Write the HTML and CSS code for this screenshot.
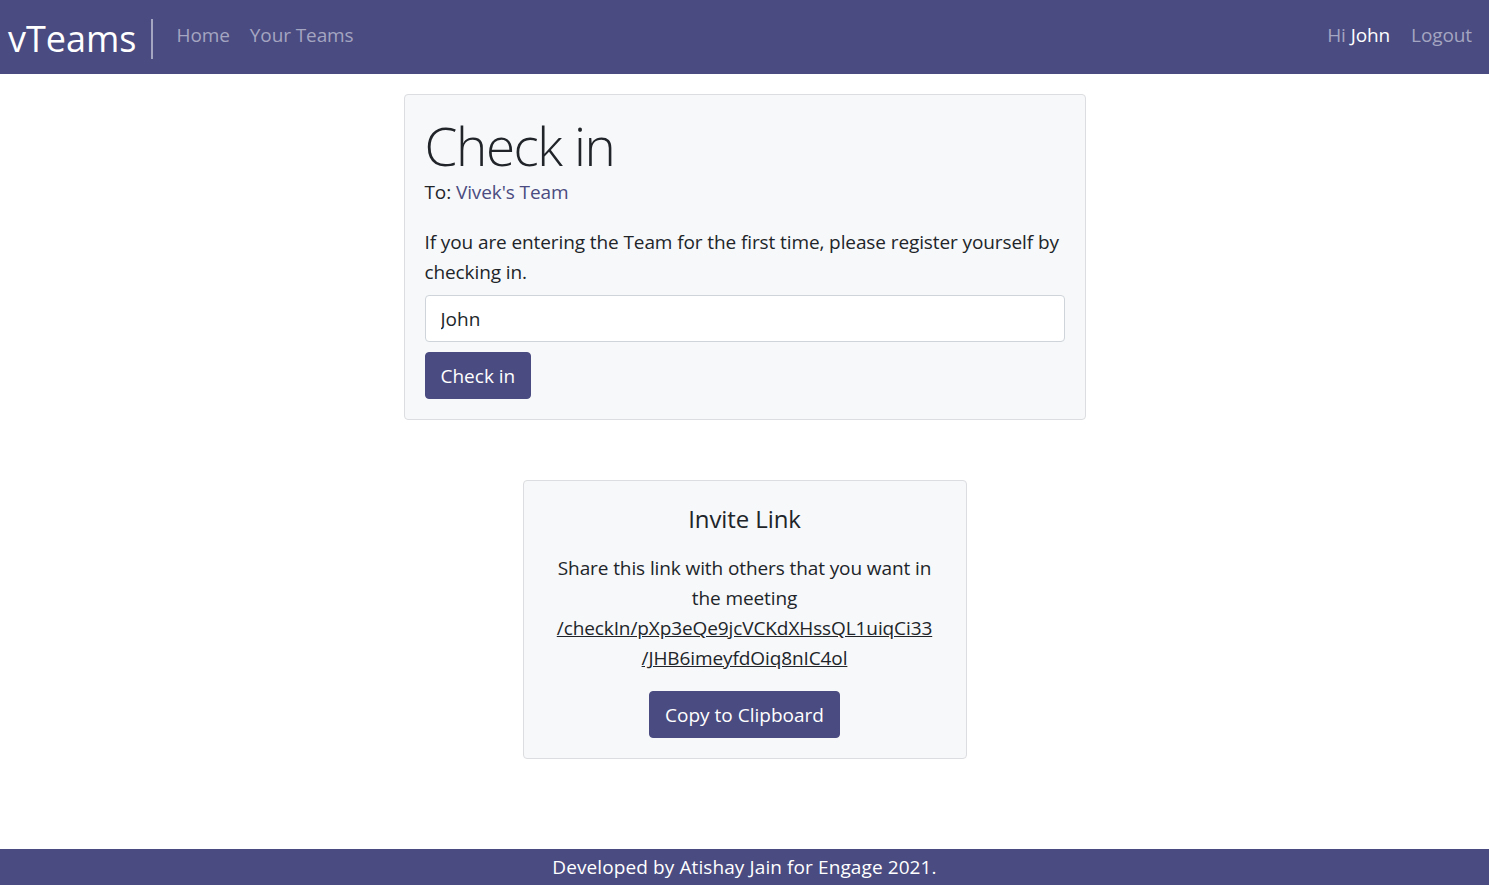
FILE: index.html
```html
<!DOCTYPE html>
<html lang="en">
<head>
<meta charset="utf-8">
<title>vTeams</title>
<link rel="stylesheet" href="styles.css">
</head>
<body>
<nav class="navbar">
  <div class="nav-left">
    <a class="brand" href="#">vTeams</a>
    <a class="nav-link" href="#">Home</a>
    <a class="nav-link" href="#">Your Teams</a>
  </div>
  <div class="nav-right">
    <span class="greeting">Hi <span class="user">John</span></span>
    <a class="nav-link" href="#">Logout</a>
  </div>
</nav>

<main class="main">
  <section class="card card-checkin">
    <h1 class="title">Check in</h1>
    <div class="to">To: <a class="team-link" href="#">Vivek's Team</a></div>
    <p class="intro">If you are entering the Team for the first time, please register yourself by checking in.</p>
    <input class="input" type="text" value="John">
    <button class="btn btn-checkin" type="button">Check in</button>
  </section>

  <section class="card card-invite">
    <h2 class="invite-title">Invite Link</h2>
    <p class="invite-text">Share this link with others that you want in the meeting <a class="invite-link" href="#">/checkIn/pXp3eQe9jcVCKdXHssQL1uiqCi33<wbr>/JHB6imeyfdOiq8nIC4ol</a></p>
    <button class="btn btn-copy" type="button">Copy to Clipboard</button>
  </section>
</main>

<footer class="footer">Developed by Atishay Jain for Engage 2021.</footer>
</body>
</html>
```
FILE: styles.css
```css
* { box-sizing: border-box; }

html, body { height: 100%; }

body {
  margin: 0;
  min-height: 100vh;
  display: flex;
  flex-direction: column;
  font-family: "Open Sans", "Noto Sans", sans-serif;
  font-size: 19px;
  line-height: 30px;
  letter-spacing: -0.1px;
  color: #212529;
  background: #ffffff;
}

a { text-decoration: none; }

/* NAVBAR */
.navbar {
  height: 74px;
  background: #4a4b80;
  display: flex;
  align-items: center;
  justify-content: space-between;
  padding: 0 17px 4px 8px;
  flex-shrink: 0;
}

.nav-left, .nav-right {
  display: flex;
  align-items: center;
}

.brand {
  color: #ffffff;
  font-size: 36px;
  line-height: 40px;
  letter-spacing: 0;
  padding: 0 14px 0 0;
  margin-right: 24px;
  border-right: 2px solid #a4a5c0;
  height: 40px;
  display: flex;
  align-items: center;
  position: relative;
  top: 4px;
}

.nav-link {
  color: #a4a5c1;
  font-size: 19px;
  margin-right: 20px;
}

.nav-left .nav-link:last-child { margin-right: 0; }
.nav-right .nav-link { margin-right: 0; }

.greeting {
  color: #a4a5c1;
  margin-right: 21px;
}

.user { color: #ffffff; }

/* MAIN */
.main {
  display: flex;
  flex-direction: column;
  align-items: center;
  padding-top: 20px;
  padding-bottom: 40px;
}

.card {
  background: #f7f8fa;
  border: 1px solid #dcdde0;
  border-radius: 4px;
  padding: 20px;
}

.card-checkin {
  width: 682px;
  display: flex;
  flex-direction: column;
  align-items: flex-start;
}

.title {
  margin: 0;
  font-size: 53px;
  font-weight: 300;
  letter-spacing: -1.4px;
  line-height: 62px;
}

.team-link { color: #4a4b80; }

.intro {
  margin: 20px 0 8px;
}

.input {
  width: 100%;
  height: 47px;
  padding: 7px 15px;
  font: inherit;
  color: #212529;
  background: #ffffff;
  border: 1px solid #ced4da;
  border-radius: 4px;
}

.btn {
  font: inherit;
  color: #ffffff;
  background: #4a4b80;
  border: 1px solid #4a4b80;
  border-radius: 4px;
  height: 47px;
  padding: 0 15px;
  cursor: pointer;
}

.btn-checkin { margin-top: 10px; }

.card-invite {
  margin-top: 60px;
  width: 444px;
  text-align: center;
}

.invite-title {
  margin: 0 0 20px;
  padding-top: 3px;
  font-size: 24px;
  font-weight: 400;
  line-height: 29px;
}

.invite-text { margin: 0 0 18px; }

.invite-link {
  color: #212529;
  text-decoration: underline;
}

/* FOOTER */
.footer {
  margin-top: auto;
  height: 36px;
  background: #4a4b80;
  color: #ffffff;
  text-align: center;
  line-height: 36px;
  letter-spacing: 0.1px;
  flex-shrink: 0;
}
```
